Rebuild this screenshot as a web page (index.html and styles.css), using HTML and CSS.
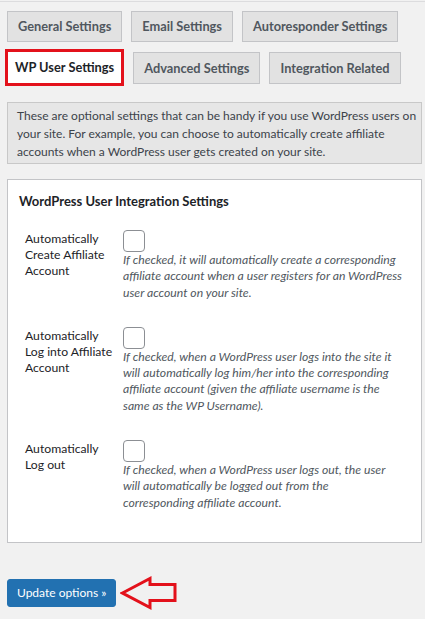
FILE: index.html
```html
<!DOCTYPE html>
<html lang="en">
<head>
<meta charset="utf-8">
<title>WP User Settings</title>
<link rel="stylesheet" href="styles.css">
</head>
<body>
<div class="page">
  <nav class="tabs">
    <div class="tab-row">
      <a class="tab">General Settings</a>
      <a class="tab">Email Settings</a>
      <a class="tab">Autoresponder Settings</a>
    </div>
    <div class="tab-row">
      <a class="tab tab-active">WP User Settings</a>
      <a class="tab">Advanced Settings</a>
      <a class="tab">Integration Related</a>
    </div>
  </nav>

  <div class="notice">These are optional settings that can be handy if you use WordPress users on your site. For example, you can choose to automatically create affiliate accounts when a WordPress user gets created on your site.</div>

  <div class="panel">
    <h3 class="panel-title">WordPress User Integration Settings</h3>
    <div class="form-grid">
      <div class="label">Automatically Create Affiliate Account</div>
      <div class="field">
        <span class="checkbox"></span>
        <p class="desc">If checked, it will automatically create a corresponding affiliate account when a user registers for an WordPress user account on your site.</p>
      </div>

      <div class="label">Automatically Log into Affiliate Account</div>
      <div class="field">
        <span class="checkbox"></span>
        <p class="desc">If checked, when a WordPress user logs into the site it will automatically log him/her into the corresponding affiliate account (given the affiliate username is the same as the WP Username).</p>
      </div>

      <div class="label">Automatically Log out</div>
      <div class="field">
        <span class="checkbox"></span>
        <p class="desc">If checked, when a WordPress user logs out, the user will automatically be logged out from the<br>corresponding affiliate account.</p>
      </div>
    </div>
  </div>

  <div class="submit">
    <button class="button-primary">Update options &raquo;</button>
    <svg class="arrow" width="58" height="34" viewBox="0 0 58 34" aria-hidden="true">
      <path d="M2.5 17 L30 2.5 L30 8.5 L55 8.5 L55 24.5 L30 24.5 L30 31.5 Z" fill="none" stroke="#e3111b" stroke-width="3" stroke-linejoin="miter"/>
    </svg>
  </div>
</div>
<div class="footer-bar"><span class="pill"></span></div>
</body>
</html>
```

FILE: styles.css
```css
html, body {
  margin: 0;
  padding: 0;
  background: #f1f1f1;
  font-family: Lato, "Open Sans", sans-serif;
  font-size: 12.2px;
  color: #3c434a;
  overflow: hidden;
}

.page {
  border-top: 1px solid #dcdcde;
  margin-top: 1px;
  padding: 9px 3px 0 7px;
}

.tabs {
  display: flex;
  flex-direction: column;
  gap: 7px;
}

.tab-row {
  display: flex;
  align-items: center;
  gap: 9px;
}

.tab {
  display: block;
  box-sizing: border-box;
  height: 31px;
  line-height: 29px;
  padding: 0 10px;
  background: #e2e2e2;
  border: 1px solid #c3c4c7;
  color: #50575e;
  font-size: 12.8px;
  font-weight: 700;
  white-space: nowrap;
}

.tab-row + .tab-row .tab {
  height: 32px;
  line-height: 30px;
}

.tab-row + .tab-row .tab.tab-active {
  height: 37px;
  line-height: 31px;
  margin-left: -2px;
  padding: 0 7px;
  background: #ffffff;
  border: 3px solid #e3111b;
  color: #1d2327;
}

.notice {
  margin-top: 16px;
  padding: 4px 4px 2px 9px;
  background: #e6e6e6;
  border: 1px solid #c8c8c8;
  font-size: 12px;
  line-height: 18px;
  color: #3c434a;
}

.panel {
  margin-top: 15px;
  background: #ffffff;
  border: 1px solid #c3c4c7;
  padding: 11px 13px 31px 11px;
}

.panel-title {
  margin: 0;
  font-size: 13px;
  font-weight: 700;
  line-height: 20px;
  color: #1d2327;
}

.form-grid {
  margin-top: 19px;
  padding-left: 6px;
  display: grid;
  grid-template-columns: 90px 1fr;
  column-gap: 8px;
  row-gap: 26px;
}

.label {
  line-height: 16px;
  color: #1d2327;
  padding-top: 1px;
}

.field {
  display: flex;
  flex-direction: column;
  align-items: flex-start;
}

.checkbox {
  display: block;
  box-sizing: border-box;
  width: 22px;
  height: 22px;
  border: 1px solid #8c8f94;
  border-radius: 4px;
  background: #fff;
}

.desc {
  margin: 0;
  max-width: 280.5px;
  font-style: italic;
  line-height: 16.3px;
  color: #50575e;
}

.submit {
  margin-top: 33px;
  display: flex;
  align-items: center;
  gap: 4px;
}

.button-primary {
  height: 28px;
  padding: 0 9px;
  background: #2271b1;
  border: 1px solid #2271b1;
  border-radius: 3px;
  color: #ffffff;
  font-family: Lato, "Open Sans", sans-serif;
  font-size: 12px;
  line-height: 26px;
}

.arrow {
  display: block;
}

.footer-bar {
  margin-top: 9px;
  border-top: 1px solid #c8c8c8;
  height: 10px;
  background: #f0f0f0;
  padding-left: 8px;
}

.pill {
  display: block;
  width: 47px;
  height: 10px;
  margin-top: 1px;
  background: #ffffff;
  border-radius: 6px 6px 0 0;
}
```
